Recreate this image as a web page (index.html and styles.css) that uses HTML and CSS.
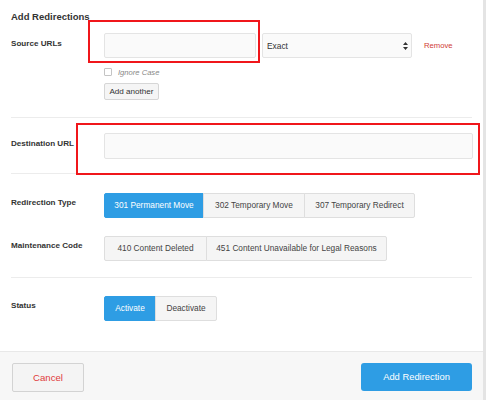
FILE: index.html
```html
<!DOCTYPE html>
<html>
<head>
<meta charset="utf-8">
<link rel="stylesheet" href="styles.css">
</head>
<body>
<div class="page">
  <div class="main">
    <h2 class="title">Add Redirections</h2>

    <div class="row row-source">
      <div class="label">Source URLs</div>
      <div class="field">
        <div class="source-line">
          <div class="input input-source"></div>
          <div class="select">
            <span>Exact</span>
            <svg class="arrows" width="5" height="8" viewBox="0 0 5 8"><path d="M2.5 0 L5 3 L0 3 Z M2.5 8 L5 5 L0 5 Z" fill="#333"/></svg>
          </div>
          <span class="remove">Remove</span>
        </div>
        <label class="check"><span class="box"></span><span class="check-text">Ignore Case</span></label>
        <div class="btn-small">Add another</div>
      </div>
      <div class="annot annot-1"></div>
    </div>

    <div class="sep sep-1"></div>

    <div class="row row-dest">
      <div class="label">Destination URL</div>
      <div class="field"><div class="input input-dest"></div></div>
      <div class="annot annot-2"></div>
    </div>

    <div class="sep sep-2"></div>

    <div class="row row-type">
      <div class="label">Redirection Type</div>
      <div class="group">
        <span class="seg active w-301">301 Permanent Move</span><span class="seg w-302">302 Temporary Move</span><span class="seg w-307">307 Temporary Redirect</span>
      </div>
    </div>

    <div class="row row-maint">
      <div class="label">Maintenance Code</div>
      <div class="group">
        <span class="seg w-410">410 Content Deleted</span><span class="seg w-451">451 Content Unavailable for Legal Reasons</span>
      </div>
    </div>

    <div class="sep sep-3"></div>

    <div class="row row-status">
      <div class="label">Status</div>
      <div class="group">
        <span class="seg active w-act">Activate</span><span class="seg w-deact">Deactivate</span>
      </div>
    </div>
  </div>

  <div class="footer">
    <div class="btn-cancel">Cancel</div>
    <div class="btn-primary">Add Redirection</div>
  </div>
</div>
</body>
</html>
```

FILE: styles.css
```css
* { box-sizing: border-box; }
html, body { margin: 0; padding: 0; background: #fff; }
body {
  font-family: "Liberation Sans", Arial, sans-serif;
  color: #333;
  width: 486px;
  height: 400px;
  overflow: hidden;
}
.page {
  width: 486px;
  height: 400px;
  border-right: 3px solid #e4e4e4;
  display: flex;
  flex-direction: column;
}
.main {
  padding: 0 11px;
  flex: 1;
  position: relative;
}
.title {
  margin: 0;
  padding-top: 11px;
  height: 33px;
  font-size: 9.5px;
  line-height: 12px;
  font-weight: bold;
  color: #333;
}
.row {
  display: flex;
  align-items: flex-start;
  position: relative;
}
.label {
  width: 93px;
  flex: none;
  font-size: 8.1px;
  font-weight: bold;
  line-height: 12px;
  padding-top: 5px;
  color: #333;
}
.field { flex: 1; }
.source-line {
  display: flex;
  align-items: center;
  height: 25px;
}
.input {
  height: 25px;
  background: #fafafa;
  border: 1px solid #e4e4e4;
  border-radius: 2px;
}
.input-source { width: 152px; }
.select {
  width: 150px;
  height: 25px;
  margin-left: 6px;
  background: #fafafa;
  border: 1px solid #e4e4e4;
  border-radius: 2px;
  display: flex;
  align-items: center;
  justify-content: space-between;
  padding: 0 3px 0 4px;
  font-size: 8.4px;
  color: #333;
}
.arrows { display: block; }
.remove {
  margin-left: 12px;
  font-size: 7.7px;
  color: #cf3b36;
}
.check {
  display: flex;
  align-items: center;
  margin-top: 10px;
  height: 8px;
}
.box {
  width: 8px;
  height: 8px;
  border: 1px solid #c4c4c4;
  border-radius: 1px;
  background: #fff;
}
.check-text {
  margin-left: 6px;
  font-size: 7.6px;
  font-style: italic;
  color: #888;
}
.btn-small {
  margin-top: 7px;
  display: inline-block;
  width: 55px;
  height: 17px;
  line-height: 15px;
  text-align: center;
  font-size: 8.1px;
  color: #333;
  background: #f5f5f5;
  border: 1px solid #d6d6d6;
  border-radius: 2px;
}
.sep {
  height: 1px;
  background: #ececec;
}
.sep-1 { margin-top: 17px; }
.row-dest { margin-top: 15px; }
.input-dest { width: 369px; height: 26px; }
.sep-2 { margin-top: 14px; }
.row-type { margin-top: 19px; }
.row-maint { margin-top: 18px; }
.sep-3 { margin-top: 16px; }
.row-status { margin-top: 18px; }
.row-type .label, .row-maint .label, .row-status .label { padding-top: 4px; }

.group { display: flex; }
.seg {
  height: 25px;
  line-height: 23px;
  padding: 0;
  text-align: center;
  font-size: 8.3px;
  color: #444;
  background: #f5f5f5;
  border: 1px solid #dedede;
  margin-left: -1px;
  white-space: nowrap;
}
.seg:first-child { margin-left: 0; border-radius: 2px 0 0 2px; }
.seg:last-child { border-radius: 0 2px 2px 0; }
.seg.active {
  background: #2e9de4;
  border-color: #2e9de4;
  color: #fff;
}
.w-301 { width: 100px; }
.w-302 { width: 102px; }
.w-307 { width: 111px; }
.w-410 { width: 103px; }
.w-451 { width: 181px; }
.w-act { width: 52px; }
.w-deact { width: 62px; }

.annot {
  position: absolute;
  border: 2px solid #f0161b;
  pointer-events: none;
}
.annot-1 { left: 77px; top: -13px; width: 172px; height: 43px; }
.annot-2 { left: 65px; top: -10px; width: 404px; height: 52px; }

.footer {
  height: 49px;
  flex: none;
  background: #f7f7f7;
  border-top: 1px solid #e8e8e8;
  display: flex;
  justify-content: space-between;
  align-items: flex-start;
  padding: 11px 11px 0 12px;
}
.btn-cancel {
  width: 72px;
  height: 29px;
  line-height: 27px;
  text-align: center;
  font-size: 9.6px;
  color: #e03a3a;
  background: #f4f4f4;
  border: 1px solid #d3d3d3;
  border-radius: 2px;
}
.btn-primary {
  width: 111px;
  height: 28px;
  line-height: 28px;
  text-align: center;
  font-size: 9.4px;
  color: #fff;
  background: #2e9de4;
  border-radius: 3px;
}
```
